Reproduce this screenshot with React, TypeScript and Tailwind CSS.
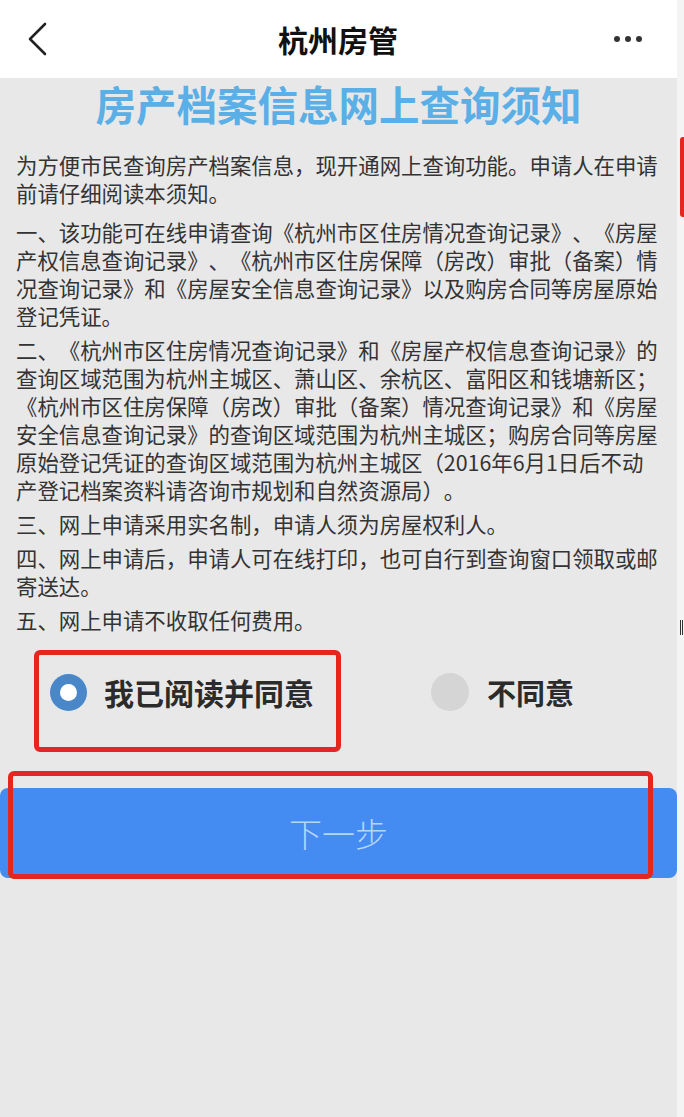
import React from "react";

const paras: string[][] = [
  [
    "为方便市民查询房产档案信息，现开通网上查询功能。申请人在申请",
    "前请仔细阅读本须知。",
  ],
  [
    "一、该功能可在线申请查询《杭州市区住房情况查询记录》、《房屋",
    "产权信息查询记录》、《杭州市区住房保障（房改）审批（备案）情",
    "况查询记录》和《房屋安全信息查询记录》以及购房合同等房屋原始",
    "登记凭证。",
  ],
  [
    "二、《杭州市区住房情况查询记录》和《房屋产权信息查询记录》的",
    "查询区域范围为杭州主城区、萧山区、余杭区、富阳区和钱塘新区；",
    "《杭州市区住房保障（房改）审批（备案）情况查询记录》和《房屋",
    "安全信息查询记录》的查询区域范围为杭州主城区；购房合同等房屋",
    "原始登记凭证的查询区域范围为杭州主城区（2016年6月1日后不动",
    "产登记档案资料请咨询市规划和自然资源局）。",
  ],
  ["三、网上申请采用实名制，申请人须为房屋权利人。"],
  [
    "四、网上申请后，申请人可在线打印，也可自行到查询窗口领取或邮",
    "寄送达。",
  ],
  ["五、网上申请不收取任何费用。"],
];

export default function App() {
  return (
    <div
      className="w-[684px] h-[1117px] flex bg-[#e8e8e8] overflow-hidden [text-spacing-trim:space-all]"
      style={{ fontFamily: '"Noto Sans CJK SC", "Noto Sans", sans-serif' }}
    >
      <div className="w-[677px] flex flex-col">
        {/* header */}
        <div className="h-[78px] bg-white flex items-center justify-between pl-[26px] pr-[35px] shrink-0">
          <svg width="24" height="36" viewBox="0 0 24 36" fill="none">
            <path d="M19 3 L4 18 L19 33" stroke="#222" strokeWidth="2.6" strokeLinecap="round" strokeLinejoin="round" />
          </svg>
          <div className="text-[30px] font-bold text-[#111] leading-none pl-[12px]">杭州房管</div>
          <div className="flex gap-[5px] items-center">
            <span className="w-[6px] h-[6px] rounded-full bg-[#333]" />
            <span className="w-[6px] h-[6px] rounded-full bg-[#333]" />
            <span className="w-[6px] h-[6px] rounded-full bg-[#333]" />
          </div>
        </div>

        {/* title */}
        <div className="mt-[2px] text-center text-[40.5px] leading-[48px] font-bold text-[#5aafe6]">
          房产档案信息网上查询须知
        </div>

        {/* body */}
        <div className="mt-[23px] pl-[16px] text-[21.4px] leading-[28px] text-[#333] flex flex-col">
          {paras.map((p, i) => (
            <div key={i} className={i === 0 ? "" : i === 1 ? "mt-[11px]" : "mt-[6px]"}>
              {p.map((line, j) => (
                <div key={j} className="whitespace-nowrap">
                  {line}
                </div>
              ))}
            </div>
          ))}
        </div>

        {/* radios */}
        <div className="relative mt-[28px] h-[60px] flex items-center">
          <div className="flex items-center pl-[50px] w-[431px]">
            <div className="w-[37px] h-[37px] rounded-full bg-[#4a87c9] flex items-center justify-center">
              <div className="w-[17px] h-[17px] rounded-full bg-white" />
            </div>
            <span className="ml-[17px] text-[30px] font-bold text-[#2b2b2b] leading-none">我已阅读并同意</span>
          </div>
          <div className="flex items-center">
            <div className="w-[38px] h-[38px] rounded-full bg-[#d5d5d5]" />
            <span className="ml-[18px] text-[29px] font-bold text-[#2b2b2b] leading-none">不同意</span>
          </div>
          <div className="absolute left-[34px] top-[-12px] w-[307px] h-[102px] border-[5px] border-[#e52620] rounded-[6px] pointer-events-none" />
        </div>

        {/* button */}
        <div className="relative mt-[66px] h-[90px] rounded-[8px] bg-[#448cf1] flex items-center justify-center">
          <span className="text-[33px] font-extralight text-[#b4d6fb] leading-none">下一步</span>
          <div className="absolute left-[8px] top-[-17px] w-[645px] h-[108px] border-[5px] border-[#e52620] rounded-[6px] pointer-events-none" />
        </div>
      </div>

      {/* right strip */}
      <div className="w-[7px] bg-[#f4f4f4] flex flex-col items-end">
        <div className="mt-[137px] w-[4px] h-[80px] bg-[#e52620] rounded-l-[3px]" />
        <div className="mt-[403px] mr-[1px] w-[3px] h-[15px] border-x border-[#333]" />
      </div>
    </div>
  );
}
